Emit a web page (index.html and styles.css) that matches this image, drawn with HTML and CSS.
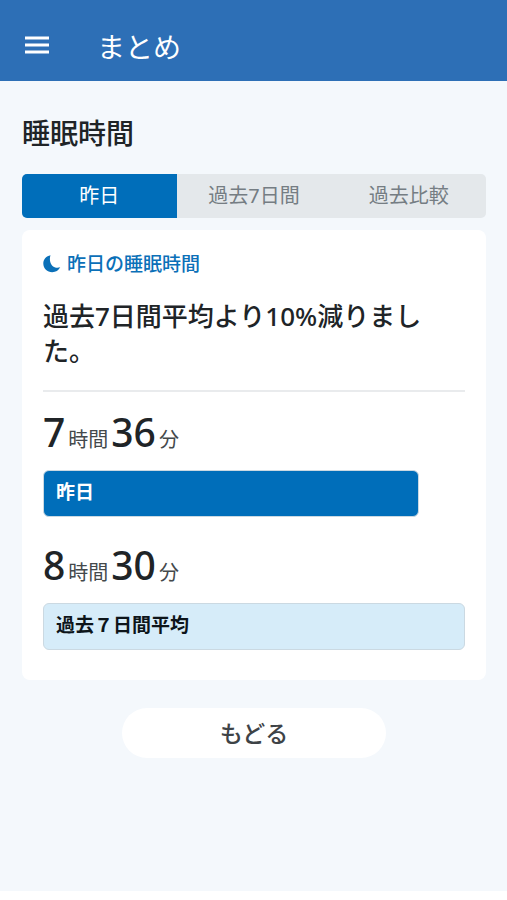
FILE: index.html
```html
<!DOCTYPE html>
<html lang="ja">
<head>
<meta charset="utf-8">
<meta name="viewport" content="width=device-width, initial-scale=1">
<title>まとめ</title>
<link rel="stylesheet" href="styles.css">
</head>
<body>
<header class="appbar">
  <button class="menu" type="button" aria-label="メニュー">
    <svg viewBox="0 0 26 18" width="26" height="18" aria-hidden="true"><path d="M1 2h24M1 9h24M1 16h24" stroke="currentColor" stroke-width="2.8"/></svg>
  </button>
  <h1 class="appbar-title">まとめ</h1>
</header>
<main class="page">
  <h2 class="section-title">睡眠時間</h2>
  <nav class="tabs">
    <button class="tab tab-active" type="button">昨日</button>
    <button class="tab" type="button">過去7日間</button>
    <button class="tab" type="button">過去比較</button>
  </nav>
  <section class="card">
    <h3 class="card-title">
      <svg class="moon" viewBox="0 0 18 18" width="18" height="18" aria-hidden="true"><path d="M7.500 .3C3.400 1 .3 4.300 .3 8.500c0 4.900 4 8.700 8.900 8.700 3.500 0 6.500-1.700 8-4.900-2.300.6-5 .6-7.100-.9C7.200 9.400 6.100 4.300 7.500 .3z" fill="currentColor"/></svg>
      <span>昨日の睡眠時間</span>
    </h3>
    <p class="summary">過去7日間平均より10%減りました。</p>
    <div class="record">
      <p class="time">7<span class="unit">時間</span>36<span class="unit">分</span></p>
      <div class="bar bar-yesterday">昨日</div>
    </div>
    <div class="record">
      <p class="time">8<span class="unit">時間</span>30<span class="unit">分</span></p>
      <div class="bar bar-average">過去７日間平均</div>
    </div>
  </section>
  <button class="back" type="button">もどる</button>
</main>
</body>
</html>
```
FILE: styles.css
```css
* {
  box-sizing: border-box;
}

body {
  margin: 0;
  min-height: 100vh;
  padding-bottom: 9px;
  display: flex;
  flex-direction: column;
  background: #fff;
  color: #202427;
  font-family: "Noto Sans", "Noto Sans CJK JP", sans-serif;
}

h1, h2, h3, p {
  margin: 0;
}

button {
  border: 0;
  padding: 0;
  background: none;
  font: inherit;
}

.appbar {
  display: flex;
  align-items: center;
  gap: 47px;
  padding: 27px 24px 14px;
  background: #2d6fb6;
  color: #fff;
}

.menu {
  display: flex;
  padding: 4px 0 8px;
  color: inherit;
}

.appbar-title {
  font-size: 28px;
  font-weight: 400;
  line-height: 40px;
}

.page {
  flex: 1;
  display: flex;
  flex-direction: column;
  padding: 32px 21px 32px 22px;
  background: #f4f8fc;
}

.section-title {
  margin-bottom: 21px;
  font-size: 28px;
  font-weight: 500;
  line-height: 40px;
}

.tabs {
  display: grid;
  grid-template-columns: repeat(3, 1fr);
  margin-bottom: 12px;
  overflow: hidden;
  border-radius: 5px;
  background: #e4e8eb;
}

.tab {
  height: 44px;
  color: #757d83;
  font-size: 20px;
  line-height: 28px;
}

.tab-active {
  background: #006eba;
  color: #fff;
}

.card {
  padding: 20px 21px 30px;
  border-radius: 8px;
  background: #fff;
}

.card-title {
  display: flex;
  align-items: center;
  gap: 6px;
  color: #0b70b8;
  font-size: 19px;
  font-weight: 500;
  line-height: 28px;
}

.summary {
  margin-top: 21px;
  padding-bottom: 21px;
  border-bottom: 2px solid #e9ebed;
  font-size: 26px;
  font-weight: 500;
  line-height: 35px;
}

.record {
  padding-top: 16px;
}

.record + .record {
  padding-top: 24px;
}

.time {
  margin-bottom: 14px;
  font-size: 39px;
  font-weight: 500;
  line-height: 48px;
}

.unit {
  margin: 0 3px;
  color: #44494c;
  font-size: 20px;
  font-weight: 400;
  line-height: 20px;
}

.bar {
  height: 47px;
  padding: 0 12px;
  border: 1px solid #cbd9e2;
  border-radius: 6px;
  font-size: 19px;
  font-weight: 700;
  line-height: 43px;
}

.bar-yesterday {
  width: 89%;
  background: #006eba;
  color: #fff;
}

.bar-average {
  background: #d6ecf9;
  color: #0d151a;
}

.back {
  align-self: center;
  width: 264px;
  height: 50px;
  margin-top: 28px;
  padding-bottom: 2px;
  border-radius: 25px;
  background: #fff;
  color: #3e4347;
  font-size: 23px;
  font-weight: 500;
}
```
